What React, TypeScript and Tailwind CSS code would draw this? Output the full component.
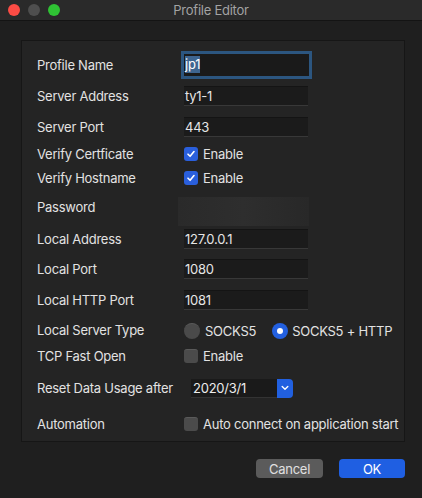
import React from "react";

const font = { fontFamily: "Inter, 'Liberation Sans', sans-serif" };

function Check() {
  return (
    <span className="flex h-[14px] w-[14px] items-center justify-center rounded-[3px] bg-[#2a5fdc]">
      <svg width="10" height="10" viewBox="0 0 10 10" fill="none">
        <path d="M2 5.2 L4.1 7.3 L8 2.6" stroke="white" strokeWidth="1.6" strokeLinecap="round" strokeLinejoin="round" />
      </svg>
    </span>
  );
}

function Unchecked() {
  return <span className="block h-[14px] w-[14px] rounded-[3px] bg-[#4b4b4b] border-t border-[#5a5a5a]" />;
}

function Field({ value }: { value: string }) {
  return (
    <div className="flex h-[20px] w-[124px] items-center border-t border-[#141414] border-b border-b-[#383838] bg-[#1b1b1b] pl-[1px] text-[13px] leading-[16px] text-[#e6e6e6]">
      {value}
    </div>
  );
}

function Row({ label, h, children }: { label: string; h: string; children?: React.ReactNode }) {
  return (
    <div className={`flex items-center ${h}`}>
      <div className="w-[147px] shrink-0 whitespace-nowrap text-[13px] leading-[16px] text-[#e2e2e2]">{label}</div>
      {children}
    </div>
  );
}

export default function App() {
  return (
    <div className="flex h-[498px] w-[422px] flex-col bg-[#1f1f1f] tracking-[-0.25px]" style={font}>
      <div className="grid h-[21px] grid-cols-[1fr_auto_1fr] items-center border-b border-[#141414] bg-[#2a2a2a]">
        <div className="flex items-center gap-[8px] pl-[8px]">
          <span className="block h-[12px] w-[12px] rounded-full bg-[#fc4c45]" />
          <span className="block h-[12px] w-[12px] rounded-full bg-[#4e4e4e]" />
          <span className="block h-[12px] w-[12px] rounded-full bg-[#2fc234]" />
        </div>
        <div className="text-[13px] leading-[16px] text-[#a3a3a3]">Profile Editor</div>
        <div />
      </div>

      <div className="ml-[21px] mr-[17px] mt-[19px] flex flex-col border border-[#161616] bg-[#242424] pl-[15px] pt-[8px] pb-[1px]">
        <Row label="Profile Name" h="h-[31px]">
          <div className="flex h-[22px] w-[125px] items-center bg-[#1a1a1a] pl-[1px] ring-[3px] ring-[#2c5680]">
            <span className="bg-[#3e6590] text-[13px] leading-[17px] text-white">jp1</span>
          </div>
        </Row>
        <Row label="Server Address" h="h-[31px]">
          <Field value="ty1-1" />
        </Row>
        <Row label="Server Port" h="h-[31px]">
          <Field value="443" />
        </Row>
        <Row label="Verify Certficate" h="h-[24px]">
          <div className="flex items-center gap-[5px]">
            <Check />
            <span className="whitespace-nowrap text-[13px] leading-[16px] text-[#e2e2e2]">Enable</span>
          </div>
        </Row>
        <Row label="Verify Hostname" h="h-[24px]">
          <div className="flex items-center gap-[5px]">
            <Check />
            <span className="whitespace-nowrap text-[13px] leading-[16px] text-[#e2e2e2]">Enable</span>
          </div>
        </Row>
        <div className="flex h-[33px] items-start">
          <div className="w-[141px] shrink-0 pt-[9px] text-[13px] leading-[16px] text-[#e2e2e2]">Password</div>
          <div className="mt-[7px] h-[29px] w-[131px] bg-gradient-to-r from-[#2a2a2a] via-[#2e2e2e] to-[#282828]" />
        </div>
        <Row label="Local Address" h="h-[31px]">
          <Field value="127.0.0.1" />
        </Row>
        <Row label="Local Port" h="h-[30px]">
          <Field value="1080" />
        </Row>
        <Row label="Local HTTP Port" h="h-[31px]">
          <Field value="1081" />
        </Row>
        <Row label="Local Server Type" h="h-[29px]">
          <div className="flex items-center whitespace-nowrap pt-[3px]">
            <span className="block h-[16px] w-[16px] rounded-full bg-[#4a4a4a] border-t border-[#5a5a5a]" />
            <span className="ml-[5px] text-[13px] leading-[16px] text-[#e2e2e2]">SOCKS5</span>
            <span className="ml-[16px] flex h-[16px] w-[16px] items-center justify-center rounded-full bg-[#2360e0]">
              <span className="block h-[6px] w-[6px] rounded-full bg-white" />
            </span>
            <span className="ml-[4px] text-[13px] leading-[16px] text-[#e2e2e2]">SOCKS5 + HTTP</span>
          </div>
        </Row>
        <Row label="TCP Fast Open" h="h-[24px]">
          <div className="flex items-center gap-[5px]">
            <Unchecked />
            <span className="whitespace-nowrap text-[13px] leading-[16px] text-[#e2e2e2]">Enable</span>
          </div>
        </Row>
        <Row label="Reset Data Usage after" h="h-[40px]">
          <div className="ml-[7px] flex h-[19px] items-stretch">
            <div className="flex w-[86px] items-center bg-[#1a1a1a] border-b border-[#333] pl-[2px] text-[13px] leading-[16px] text-[#ececec]">
              2020/3/1
            </div>
            <div className="flex w-[16px] items-center justify-center rounded-r-[4px] bg-[#2160e0]">
              <svg width="8" height="6" viewBox="0 0 8 6" fill="none">
                <path d="M1.2 1.6 L4 4.3 L6.8 1.6" stroke="white" strokeWidth="1.4" strokeLinecap="round" strokeLinejoin="round" />
              </svg>
            </div>
          </div>
        </Row>
        <Row label="Automation" h="h-[32px]">
          <div className="flex items-center gap-[5px] pb-[1px]">
            <Unchecked />
            <span className="whitespace-nowrap text-[13px] leading-[16px] text-[#e2e2e2]">Auto connect on application start</span>
          </div>
        </Row>
      </div>

      <div className="mr-[17px] mt-[17px] flex justify-end gap-[16px]">
        <div className="flex h-[19px] w-[67px] items-center justify-center rounded-[4px] bg-[#5b5b5b] text-[13px] leading-[16px] text-[#e0e0e0]">
          Cancel
        </div>
        <div className="flex h-[19px] w-[66px] items-center justify-center rounded-[4px] bg-[#1f5fe2] text-[13px] leading-[16px] text-white">
          OK
        </div>
      </div>
    </div>
  );
}
